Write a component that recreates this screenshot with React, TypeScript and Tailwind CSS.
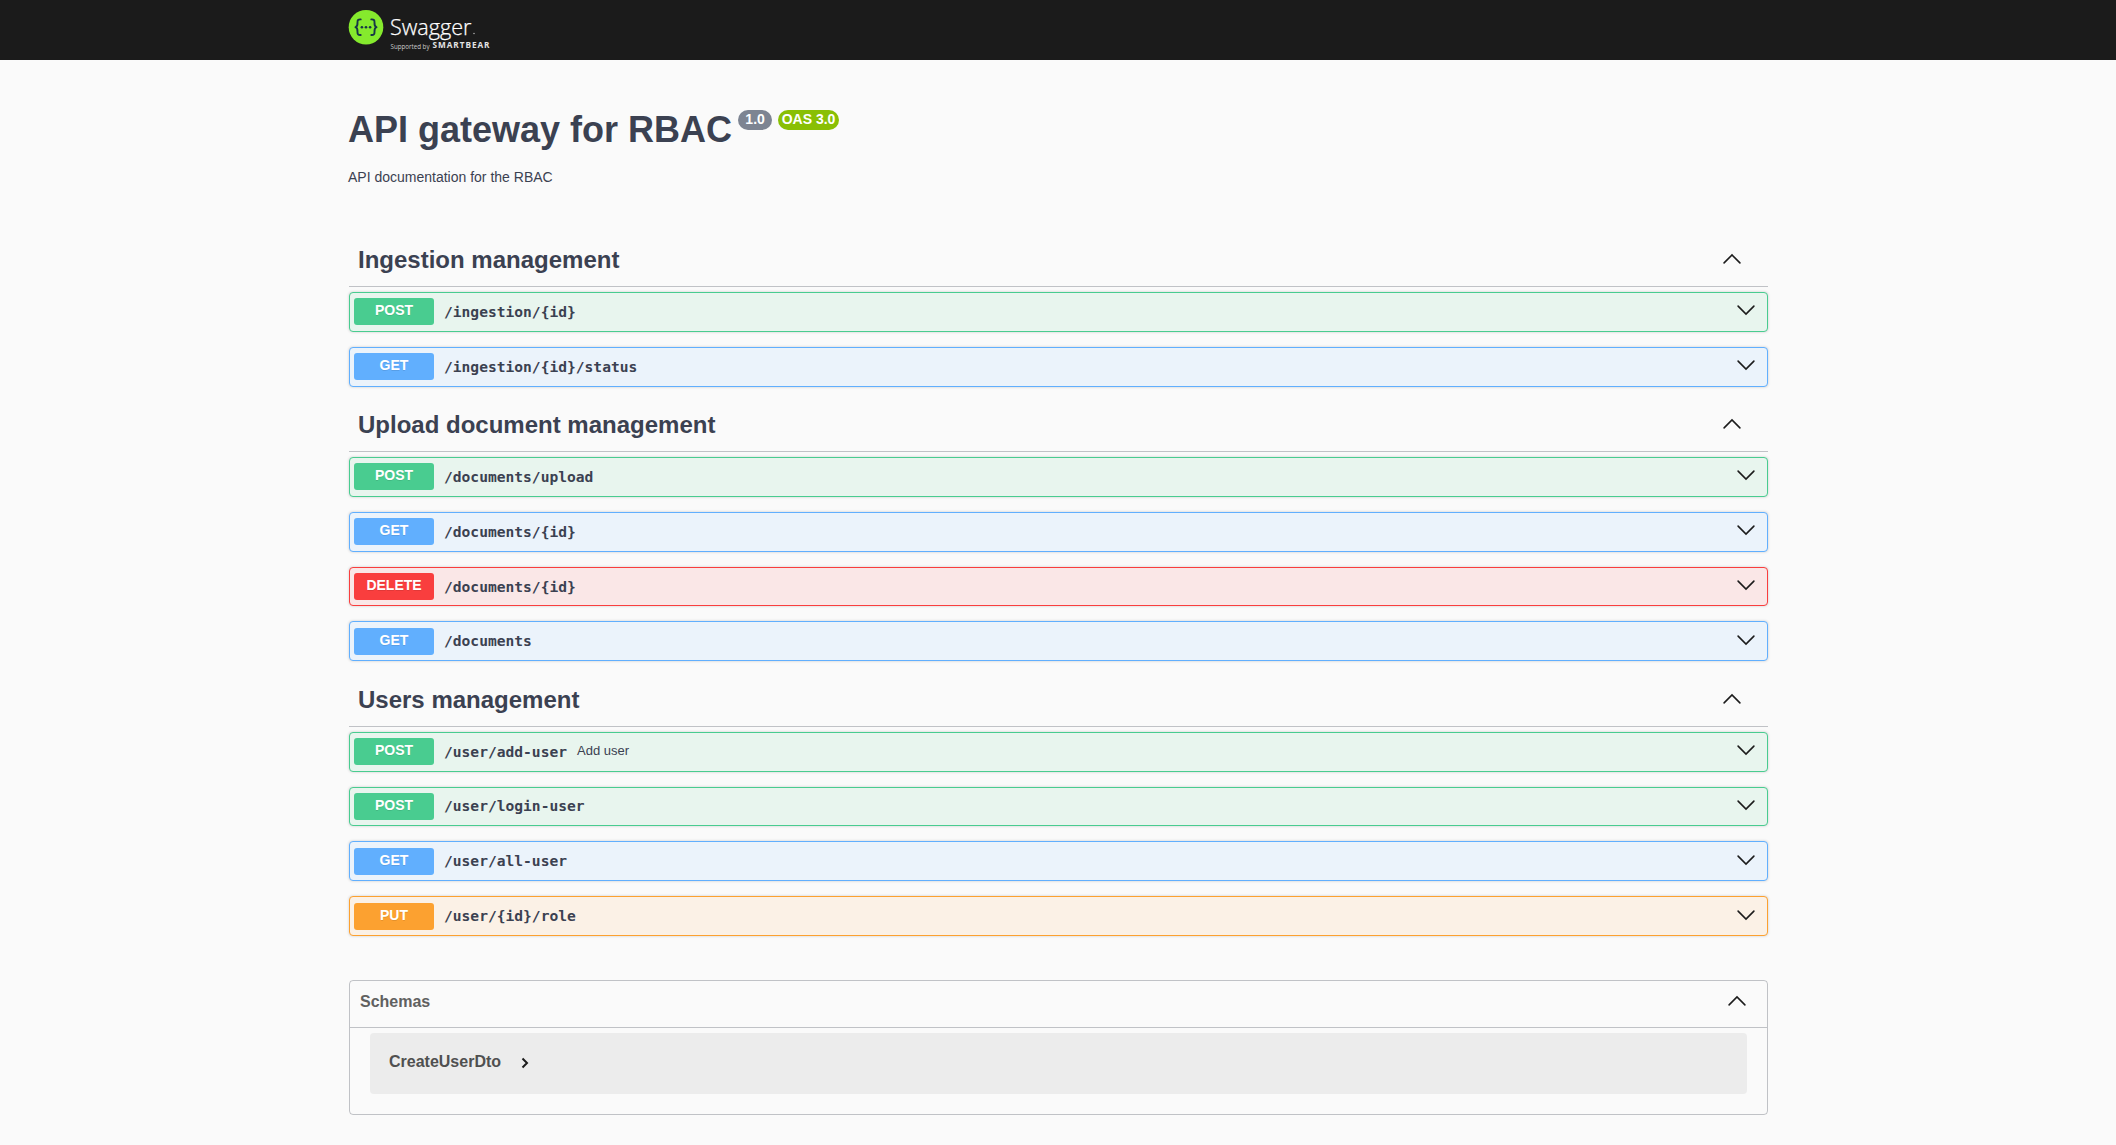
type Method = "POST" | "GET" | "DELETE" | "PUT";

interface Operation {
  method: Method;
  path: string;
  summary?: string;
}

const sections: { title: string; operations: Operation[] }[] = [
  {
    title: "Ingestion management",
    operations: [
      { method: "POST", path: "/ingestion/{id}" },
      { method: "GET", path: "/ingestion/{id}/status" },
    ],
  },
  {
    title: "Upload document management",
    operations: [
      { method: "POST", path: "/documents/upload" },
      { method: "GET", path: "/documents/{id}" },
      { method: "DELETE", path: "/documents/{id}" },
      { method: "GET", path: "/documents" },
    ],
  },
  {
    title: "Users management",
    operations: [
      { method: "POST", path: "/user/add-user", summary: "Add user" },
      { method: "POST", path: "/user/login-user" },
      { method: "GET", path: "/user/all-user" },
      { method: "PUT", path: "/user/{id}/role" },
    ],
  },
];

const rowStyles: Record<Method, string> = {
  POST: "border-[#49cc90] bg-[#e8f5ee]",
  GET: "border-[#61affe] bg-[#ebf3fb]",
  DELETE: "border-[#f93e3e] bg-[#fae7e7]",
  PUT: "border-[#fca130] bg-[#fbf1e6]",
};

const badgeStyles: Record<Method, string> = {
  POST: "bg-[#49cc90]",
  GET: "bg-[#61affe]",
  DELETE: "bg-[#f93e3e]",
  PUT: "bg-[#fca130]",
};

function Chevron({ up = false, className = "" }: { up?: boolean; className?: string }) {
  return (
    <svg className={`h-5 w-5 shrink-0 ${className}`} viewBox="0 0 20 20" fill="none" stroke="#1c1c1c" strokeWidth="1.6" strokeLinecap="round">
      <path d={up ? "M2.1 13.9 10 6l7.9 7.9" : "M2.1 6.1 10 14l7.9-7.9"} />
    </svg>
  );
}

function Logo() {
  return (
    <svg className="h-[59px] w-[150px]" viewBox="0 0 150 59" fontFamily="'Open Sans', sans-serif">
      <circle cx="18" cy="27.2" r="17.3" fill="#85ea2d" />
      <g fill="none" stroke="#173647" strokeWidth="1.9" strokeLinecap="round" strokeLinejoin="round" transform="translate(.5 .2)">
        <path d="M12.2 19.2c-2.6-.2-3.3.8-3.2 3 .1 2.6.2 4.2-2 4.8 2.2.6 2.1 2.2 2 4.8-.1 2.2.6 3.2 3.2 3" />
        <path d="M22.8 19.2c2.6-.2 3.3.8 3.2 3-.1 2.6-.2 4.2 2 4.8-2.2.6-2.1 2.2-2 4.8.1 2.2-.6 3.2-3.2 3" />
      </g>
      <g fill="#173647">
        <circle cx="13.9" cy="27.2" r="1.3" />
        <circle cx="18" cy="27.2" r="1.3" />
        <circle cx="22.1" cy="27.2" r="1.3" />
      </g>
      <text x="42" y="34.5" fontSize="22" fontWeight="300" fill="#fff" stroke="#fff" strokeWidth=".25" textLength="81.5" lengthAdjust="spacingAndGlyphs">Swagger</text>
      <circle cx="126" cy="33.5" r=".8" fill="#aaa" />
      <text x="42.5" y="48.5" fontSize="7" fill="#ccc" textLength="39" lengthAdjust="spacingAndGlyphs">Supported by</text>
      <text x="84.5" y="48.3" fontSize="8.2" fontWeight="700" fill="#e4e4e4" textLength="57">SMARTBEAR</text>
    </svg>
  );
}

function OperationRow({ method, path, summary }: Operation) {
  return (
    <div className={`mb-[15px] flex h-[39.8px] items-center rounded border pr-[11px] pl-1 shadow-[0_0_3px_rgba(0,0,0,0.19)] ${rowStyles[method]}`}>
      <span className={`h-[27px] w-20 shrink-0 rounded-[3px] text-center text-sm leading-6 font-bold text-white [text-shadow:0_1px_0_rgba(0,0,0,0.1)] ${badgeStyles[method]}`}>
        {method}
      </span>
      <span className="ml-2.5 font-['DejaVu_Sans_Mono',monospace] text-[14.6px] leading-5 font-bold">{path}</span>
      {summary && <span className="-mt-0.5 ml-2.5 text-[13px]">{summary}</span>}
      <Chevron className="-mt-[3px] ml-auto" />
    </div>
  );
}

export default function App() {
  return (
    <div className="min-h-[1145px] bg-[#fafafa] font-['Liberation_Sans',Arial,sans-serif] text-[#3b4151]">
      <header className="h-[59.5px] bg-[#1b1b1b]">
        <div className="mx-auto w-[1420px]">
          <Logo />
        </div>
      </header>
      <main className="mx-auto w-[1422px] pr-px pl-0.5">
        <div className="-ml-px h-[177px] pt-12">
          <div className="flex items-start">
            <h1 className="pt-px text-4xl leading-[42px] font-bold">API gateway for RBAC</h1>
            <span className="mt-0.5 ml-1.5 h-5 w-[34px] rounded-full bg-[#7d8492] text-center text-sm leading-[19px] font-bold text-white">1.0</span>
            <span className="mt-0.5 ml-1.5 h-5 w-[61px] rounded-full bg-[#89bf04] text-center text-sm leading-[19px] font-bold whitespace-nowrap text-white">OAS 3.0</span>
          </div>
          <p className="mt-4 text-sm leading-5">API documentation for the RBAC</p>
        </div>
        {sections.map((section) => (
          <section key={section.title}>
            <div className="mb-[5px] flex h-[50.5px] items-center border-b border-[#3b4151]/30 pr-[26px] pb-[3px] pl-[9px]">
              <h2 className="text-2xl font-bold">{section.title}</h2>
              <Chevron up className="-mt-px ml-auto" />
            </div>
            {section.operations.map((operation) => (
              <OperationRow key={operation.method + operation.path} {...operation} />
            ))}
          </section>
        ))}
        <div className="mt-11 rounded border border-[#3b4151]/30">
          <div className="flex h-[47px] items-center border-b border-[#3b4151]/30 pr-5 pl-2.5">
            <h3 className="-mt-1 text-base font-bold text-[#606060]">Schemas</h3>
            <Chevron up className="-mt-[5px] ml-auto" />
          </div>
          <div className="mx-5 mt-[5px] mb-5 flex h-[61px] items-center rounded bg-[#ececec] pl-[19px]">
            <span className="-mt-0.5 text-base font-bold text-[#505050]">CreateUserDto</span>
            <svg className="ml-[18px] h-3 w-3" viewBox="0 0 12 12" fill="none" stroke="#1c1c1c" strokeWidth="2">
              <path d="m3.5 1.5 4.5 4.5-4.5 4.5" />
            </svg>
          </div>
        </div>
      </main>
    </div>
  );
}
